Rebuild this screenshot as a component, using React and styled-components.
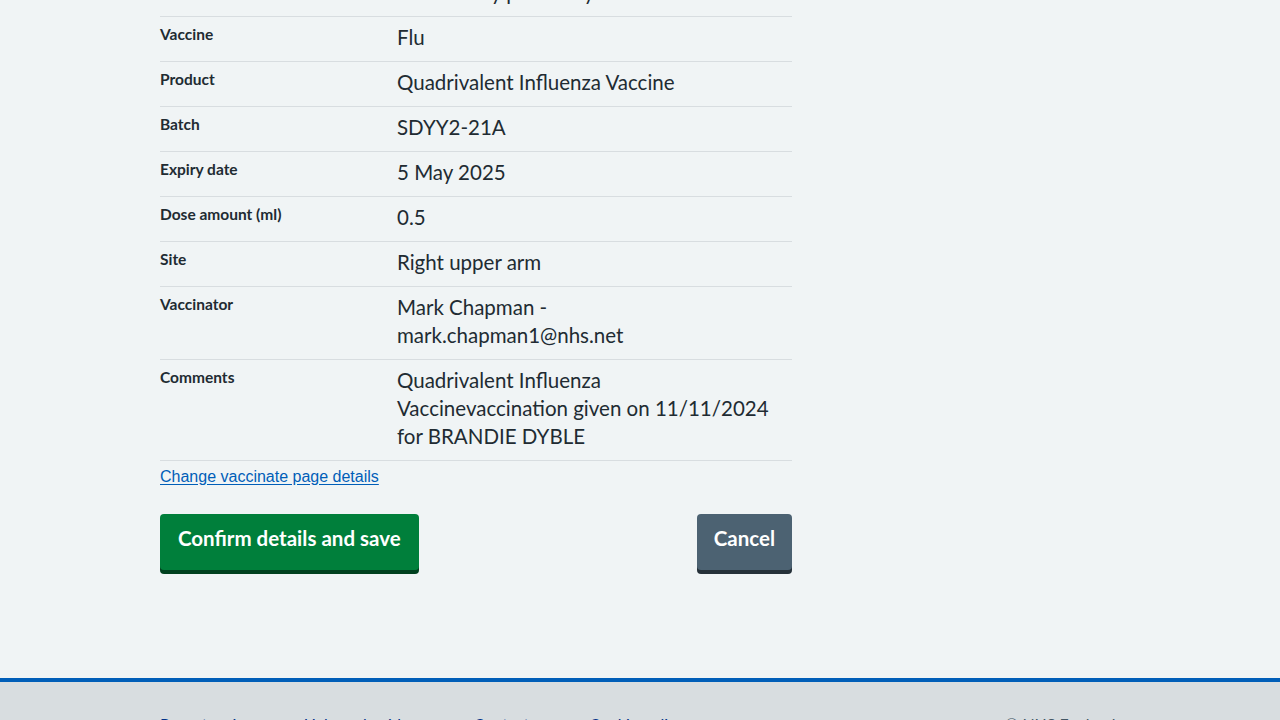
import React from 'react';
import styled, { createGlobalStyle } from 'styled-components';

const GlobalStyle = createGlobalStyle`
  * { box-sizing: border-box; }
  html, body { margin: 0; padding: 0; }
  body {
    background: #f0f4f5;
    color: #212b32;
    font-family: Lato, "Noto Sans", "Liberation Sans", sans-serif;
    -webkit-font-smoothing: antialiased;
    overflow: hidden;
  }
`;

const Page = styled.div`
  display: flex;
  flex-direction: column;
  margin-top: -28px;
`;

const Main = styled.main`
  width: 632px;
  margin: 0 0 0 160px;
  padding-bottom: 108px;
`;

const SummaryList = styled.dl`
  margin: 0;
  display: flex;
  flex-direction: column;
`;

const Row = styled.div`
  display: flex;
  border-bottom: 1px solid #d8dde0;
  padding: 8px 0;
`;

const Key = styled.dt`
  flex: 0 0 237px;
  margin: 0;
  font-size: 15.5px;
  line-height: 18px;
  font-weight: 700;
`;

const Value = styled.dd`
  flex: 1;
  margin: -2px 0 2px;
  padding-right: 18px;
  font-size: 20.5px;
  line-height: 28px;
  font-weight: 400;
`;

const ChangeLink = styled.a`
  display: inline-block;
  font-family: "Liberation Sans", Arial, sans-serif;
  font-size: 16px;
  line-height: 18px;
  margin-top: 7px;
  color: #005eb8;
  text-decoration: underline;
  text-underline-offset: 2px;
`;

const ButtonRow = styled.div`
  display: flex;
  justify-content: space-between;
  align-items: flex-start;
  margin-top: 28px;
`;

const Button = styled.button`
  font-family: Lato, "Noto Sans", sans-serif;
  font-size: 20.5px;
  font-weight: 700;
  line-height: 24px;
  color: #ffffff;
  border: 0;
  border-radius: 4px;
  padding: 12px ${p => (p.$variant === 'secondary' ? 17 : 18)}px 20px;
  height: 56px;
  cursor: pointer;
  background: ${p => (p.$variant === 'secondary' ? '#4c6272' : '#007f3b')};
  box-shadow: 0 4px 0 ${p => (p.$variant === 'secondary' ? '#263139' : '#00401e')};
`;

const Footer = styled.footer`
  background: #d8dde0;
  border-top: 4px solid #005eb8;
  padding: 30px 160px 40px;
  display: flex;
  justify-content: space-between;
  align-items: flex-start;
`;

const FooterLinks = styled.ul`
  list-style: none;
  margin: 0;
  padding: 0;
  display: flex;
`;

const FooterLink = styled.li`
  margin-right: ${p => p.$gap}px;
  a {
    color: #003087;
    font-size: 16px;
    line-height: 24px;
    text-decoration: none;
  }
`;

const Copyright = styled.p`
  margin: 0 0 0 auto;
  font-size: 16px;
  line-height: 24px;
  color: #425563;
  width: 115px;
`;

const rows = [
  ['Care setting', 'Community pharmacy'],
  ['Vaccine', 'Flu'],
  ['Product', 'Quadrivalent Influenza Vaccine'],
  ['Batch', 'SDYY2-21A'],
  ['Expiry date', '5 May 2025'],
  ['Dose amount (ml)', '0.5'],
  ['Site', 'Right upper arm'],
  ['Vaccinator', 'Mark Chapman - mark.chapman1@nhs.net'],
  ['Comments', 'Quadrivalent Influenza Vaccinevaccination given on 11/11/2024 for BRANDIE DYBLE'],
];

const footerLinks = [
  ['Report an issue', 36],
  ['Help and guidance', 40],
  ['Contact us', 40],
  ['Cookie policy', 0],
];

export default function App() {
  return (
    <>
      <GlobalStyle />
      <Page>
        <Main>
          <SummaryList>
            {rows.map(([k, v]) => (
              <Row key={k}>
                <Key>{k}</Key>
                <Value>{v}</Value>
              </Row>
            ))}
          </SummaryList>
          <ChangeLink href="#">Change vaccinate page details</ChangeLink>
          <ButtonRow>
            <Button>Confirm details and save</Button>
            <Button $variant="secondary">Cancel</Button>
          </ButtonRow>
        </Main>
        <Footer>
          <FooterLinks>
            {footerLinks.map(([label, gap]) => (
              <FooterLink key={label} $gap={gap}>
                <a href="#">{label}</a>
              </FooterLink>
            ))}
          </FooterLinks>
          <Copyright>© NHS England</Copyright>
        </Footer>
      </Page>
    </>
  );
}
